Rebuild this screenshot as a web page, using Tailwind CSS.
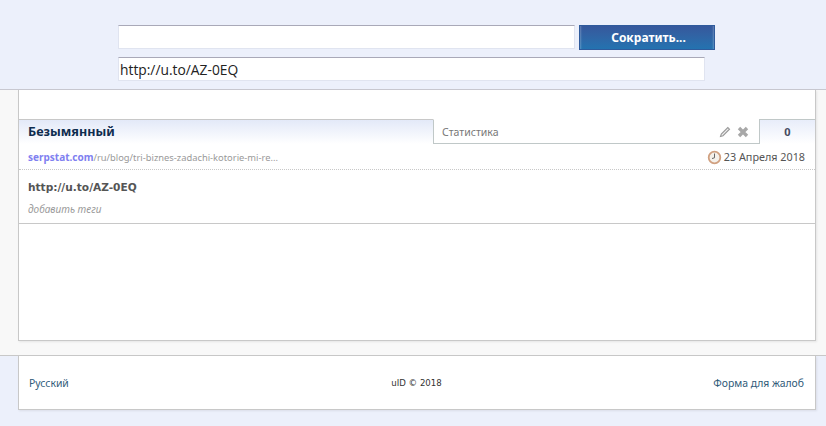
<!DOCTYPE html>
<html><head><meta charset="utf-8">
<script src="https://cdn.jsdelivr.net/npm/@tailwindcss/browser@4"></script>
</head>
<body class="w-[826px] h-[426px] overflow-hidden bg-[#ecf0fb] font-['Noto_Sans','DejaVu_Sans',sans-serif]">
<header class="h-[90px] border-b border-[#c8c8d0] pt-[25px] pl-[118px]">
  <div class="flex items-start gap-[4px]">
    <div class="w-[457px] h-[24px] bg-white border border-[#e0e4f0] border-t-[#a9a9b8]"></div>
    <button class="w-[136px] h-[25px] border border-[#2f5b9c] bg-gradient-to-b from-[#36589c] to-[#2373b0] text-white text-[12px] font-bold leading-[22px] pl-[3px] shadow-[inset_3px_0_2px_-2px_rgba(255,255,255,0.25),inset_-3px_0_2px_-2px_rgba(255,255,255,0.25)]">Сократить...</button>
  </div>
  <div class="w-[587px] h-[24px] mt-[7px] bg-white border border-[#e0e4f0] border-t-[#a9a9b8] text-[13.8px] leading-[23px] text-[#222] pl-[1px] font-['Open_Sans',sans-serif]">http://u.to/AZ-0EQ</div>
</header>
<main class="h-[265px] bg-[#f8f8f8] pl-[18px]">
  <section class="w-[798px] h-[251px] bg-white border-x border-b border-[#c8c8c8] shadow-[1px_1px_2px_rgba(0,0,0,0.08)] pt-[29px]">
    <div class="h-[105px] border-b border-[#c8c8c8]">
      <div class="flex h-[25px]">
        <div class="w-[414px] pl-[9px] border-t border-[#c8c8c8] bg-gradient-to-b from-[#e3e9f8] to-white text-[12.6px] font-bold text-[#0f2d4f] leading-[23px]">Безымянный</div>
        <div class="flex-1 border-l border-t border-l-[#c0c8c8] border-t-transparent border-b border-b-[#c0c8c8] pl-[8px] flex items-center">
          <span class="text-[10.5px] text-[#777] pt-[2px]">Статистика</span>
          <div class="ml-auto mr-[10px] flex items-center gap-[6px]">
            <svg width="12" height="12" viewBox="0 0 12 12"><path d="M1.5 10.5 L2.3 8 L8.8 1.5 L10.5 3.2 L4 9.7 Z" fill="#eee" stroke="#999" stroke-width="1.1"/></svg>
            <svg width="12" height="12" viewBox="0 0 12 12"><path d="M2 2 L10 10 M10 2 L2 10" stroke="#a8a8a8" stroke-width="3.4"/></svg>
          </div>
        </div>
        <div class="w-[56px] h-[25px] border-l border-t border-[#c0c8c8] bg-gradient-to-b from-[#e8edfa] to-white text-center text-[11px] font-bold text-[#444a60] leading-[24px]">0</div>
      </div>
      <div class="h-[26px] border-b border-dotted border-[#c8c8c8] pl-[9px] pr-[10px] pt-[2px] flex items-center justify-between text-[10px]">
        <div><span class="font-bold text-[#8080f0]">serpstat.com</span><span class="text-[#999] text-[9.35px]">/ru/blog/tri-biznes-zadachi-kotorie-mi-re...</span></div>
        <div class="flex items-center gap-[2px] text-[10.8px] text-[#555]">
          <svg width="15" height="15" viewBox="0 0 15 15"><circle cx="7.5" cy="7.5" r="5.8" fill="#f4f0ea" stroke="#d0a080" stroke-width="1.8"/><path d="M7.5 3.5V7.8L5 8.5" fill="none" stroke="#666" stroke-width="1"/></svg>
          <span>23 Апреля 2018</span>
        </div>
      </div>
      <div class="pl-[9px] pt-[9px] text-[10.6px] font-bold text-[#555] font-['DejaVu_Sans',sans-serif] leading-[16px]">http://u.to/AZ-0EQ</div>
      <div class="pl-[9px] pt-[6px] whitespace-nowrap text-[10px] italic text-[#999] leading-[16px]">добавить теги</div>
    </div>
  </section>
</main>
<footer class="w-full h-[55px] border-t border-[#c8c8c8] bg-[#ecf0fb] pl-[18px]">
  <div class="w-[798px] h-[54px] bg-white border-x border-b border-[#c8c8c8] shadow-[1px_1px_2px_rgba(0,0,0,0.08)] pl-[10px] pr-[11px] flex items-center justify-between text-[10.4px] text-[#2f5a78] pt-[2px]">
    <span class="w-[100px]">Русский</span>
    <span class="text-[8.6px] text-[#333] font-['DejaVu_Sans',sans-serif] pb-[1px]">uID © 2018</span>
    <span class="w-[100px] flex justify-end whitespace-nowrap">Форма для жалоб</span>
  </div>
</footer>
</body></html>
